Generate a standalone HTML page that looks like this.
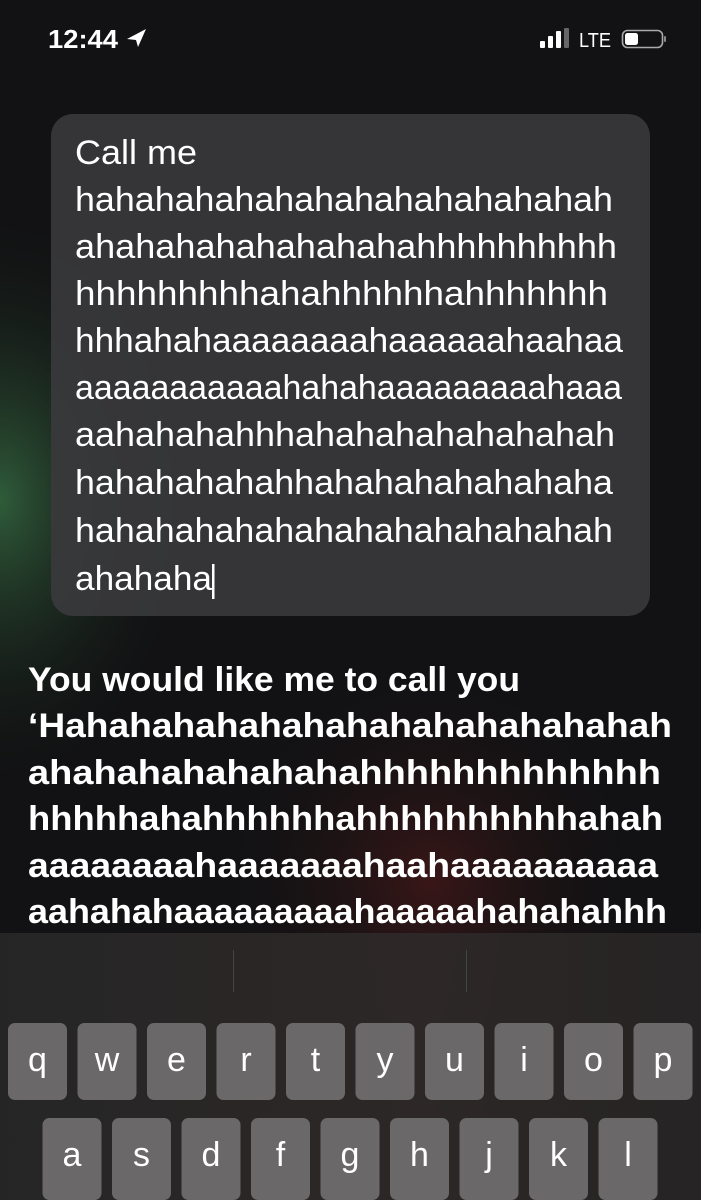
<!DOCTYPE html>
<html><head><meta charset="utf-8"><style>
html,body{margin:0;padding:0;background:#111;width:701px;height:1200px;overflow:hidden}
svg{display:block}
text{font-family:"Liberation Sans",sans-serif;fill:#fff}
.k text{font-size:34px;text-anchor:middle}
</style></head><body>
<svg width="701" height="1200" viewBox="0 0 701 1200" xmlns="http://www.w3.org/2000/svg">
<defs>
<radialGradient id="g1" cx="0" cy="0" r="1" gradientUnits="userSpaceOnUse" gradientTransform="translate(0 500) scale(200 300)">
<stop offset="0" stop-color="#31603c" stop-opacity="0.95"/><stop offset="1" stop-color="#111" stop-opacity="0"/></radialGradient>
<radialGradient id="g2" cx="430" cy="880" r="220" gradientUnits="userSpaceOnUse">
<stop offset="0" stop-color="#5a1a1a" stop-opacity="0.55"/><stop offset="1" stop-color="#111" stop-opacity="0"/></radialGradient>
<linearGradient id="kb" x1="0" y1="0" x2="1" y2="0">
<stop offset="0" stop-color="#262626"/><stop offset="0.6" stop-color="#2e2828"/><stop offset="1" stop-color="#262424"/></linearGradient>
</defs>
<rect width="701" height="1200" fill="#121214"/>
<rect width="701" height="1200" fill="url(#g1)"/>
<rect width="701" height="1200" fill="url(#g2)"/>
<!-- status bar -->
<text x="48" y="48" font-size="26" font-weight="bold" textLength="70" lengthAdjust="spacingAndGlyphs">12:44</text>
<path d="M146 29 L127 39 L136 40 L138 47 Z" fill="#fff"/>
<rect x="540" y="41" width="5" height="7" rx="1" fill="#fff"/>
<rect x="548" y="36" width="5" height="12" rx="1" fill="#fff"/>
<rect x="556" y="31" width="5" height="17" rx="1" fill="#fff"/>
<rect x="564" y="28" width="5" height="20" rx="1" fill="#666"/>
<text x="579" y="47" font-size="20" textLength="32" lengthAdjust="spacingAndGlyphs">LTE</text>
<rect x="622.5" y="30.5" width="40" height="17" rx="5" fill="none" stroke="#aaa" stroke-width="1.6"/>
<rect x="625" y="33" width="13" height="12" rx="2.5" fill="#fff"/>
<rect x="664" y="36" width="2" height="6" rx="1" fill="#888"/>
<!-- bubble -->
<rect x="51" y="114" width="599" height="502" rx="22" fill="#3a3a3c" fill-opacity="0.9"/>
<g font-size="34">
<text x="75" y="164" textLength="122" lengthAdjust="spacingAndGlyphs">Call me</text>
<text x="75" y="211" textLength="538" lengthAdjust="spacingAndGlyphs">hahahahahahahahahahahahahah</text>
<text x="75" y="258" textLength="542" lengthAdjust="spacingAndGlyphs">ahahahahahahahahahhhhhhhhhh</text>
<text x="75" y="305" textLength="533" lengthAdjust="spacingAndGlyphs">hhhhhhhhhahahhhhhhahhhhhhh</text>
<text x="75" y="352" textLength="548" lengthAdjust="spacingAndGlyphs">hhhahahaaaaaaaahaaaaaahaahaa</text>
<text x="75" y="399" textLength="547" lengthAdjust="spacingAndGlyphs">aaaaaaaaaaahahahaaaaaaaaahaaa</text>
<text x="75" y="446" textLength="540" lengthAdjust="spacingAndGlyphs">aahahahahhhahahahahahahahah</text>
<text x="75" y="494" textLength="538" lengthAdjust="spacingAndGlyphs">hahahahahahhahahahahahahaha</text>
<text x="75" y="542" textLength="538" lengthAdjust="spacingAndGlyphs">hahahahahahahahahahahahahah</text>
<text x="75" y="590" textLength="137" lengthAdjust="spacingAndGlyphs">ahahaha</text>
</g>
<rect x="212" y="564" width="2.5" height="35" fill="#fff"/>
<!-- siri response -->
<g font-size="34" font-weight="bold">
<text x="28" y="691" textLength="492" lengthAdjust="spacingAndGlyphs">You would like me to call you</text>
<text x="28" y="737" textLength="644" lengthAdjust="spacingAndGlyphs">‘Hahahahahahahahahahahahahahah</text>
<text x="28" y="784" textLength="633" lengthAdjust="spacingAndGlyphs">ahahahahahahahahhhhhhhhhhhhh</text>
<text x="28" y="830" textLength="635" lengthAdjust="spacingAndGlyphs">hhhhhahahhhhhhahhhhhhhhhhahah</text>
<text x="28" y="877" textLength="630" lengthAdjust="spacingAndGlyphs">aaaaaaaahaaaaaaahaahaaaaaaaaaa</text>
<text x="28" y="923" textLength="639" lengthAdjust="spacingAndGlyphs">aahahahaaaaaaaaahaaaaahahahahhh</text>
</g>
<!-- keyboard -->
<rect x="0" y="933" width="701" height="267" fill="url(#kb)" fill-opacity="0.97"/>
<rect x="233" y="950" width="1" height="42" fill="#444"/>
<rect x="466" y="950" width="1" height="42" fill="#444"/>
<g class="k" fill="#6b6869">
<rect x="8" y="1023" width="59" height="77" rx="7"/>
<rect x="77.5" y="1023" width="59" height="77" rx="7"/>
<rect x="147" y="1023" width="59" height="77" rx="7"/>
<rect x="216.5" y="1023" width="59" height="77" rx="7"/>
<rect x="286" y="1023" width="59" height="77" rx="7"/>
<rect x="355.5" y="1023" width="59" height="77" rx="7"/>
<rect x="425" y="1023" width="59" height="77" rx="7"/>
<rect x="494.5" y="1023" width="59" height="77" rx="7"/>
<rect x="564" y="1023" width="59" height="77" rx="7"/>
<rect x="633.5" y="1023" width="59" height="77" rx="7"/>
<rect x="42.5" y="1118" width="59" height="82" rx="7"/>
<rect x="112" y="1118" width="59" height="82" rx="7"/>
<rect x="181.5" y="1118" width="59" height="82" rx="7"/>
<rect x="251" y="1118" width="59" height="82" rx="7"/>
<rect x="320.5" y="1118" width="59" height="82" rx="7"/>
<rect x="390" y="1118" width="59" height="82" rx="7"/>
<rect x="459.5" y="1118" width="59" height="82" rx="7"/>
<rect x="529" y="1118" width="59" height="82" rx="7"/>
<rect x="598.5" y="1118" width="59" height="82" rx="7"/>
<text x="37.5" y="1071">q</text><text x="107" y="1071">w</text><text x="176.5" y="1071">e</text>
<text x="246" y="1071">r</text><text x="315.5" y="1071">t</text><text x="385" y="1071">y</text>
<text x="454.5" y="1071">u</text><text x="524" y="1071">i</text><text x="593.5" y="1071">o</text>
<text x="663" y="1071">p</text>
<text x="72" y="1166">a</text><text x="141.5" y="1166">s</text><text x="211" y="1166">d</text>
<text x="280.5" y="1166">f</text><text x="350" y="1166">g</text><text x="419.5" y="1166">h</text>
<text x="489" y="1166">j</text><text x="558.5" y="1166">k</text><text x="628" y="1166">l</text>
</g>
</svg>
</body></html>
